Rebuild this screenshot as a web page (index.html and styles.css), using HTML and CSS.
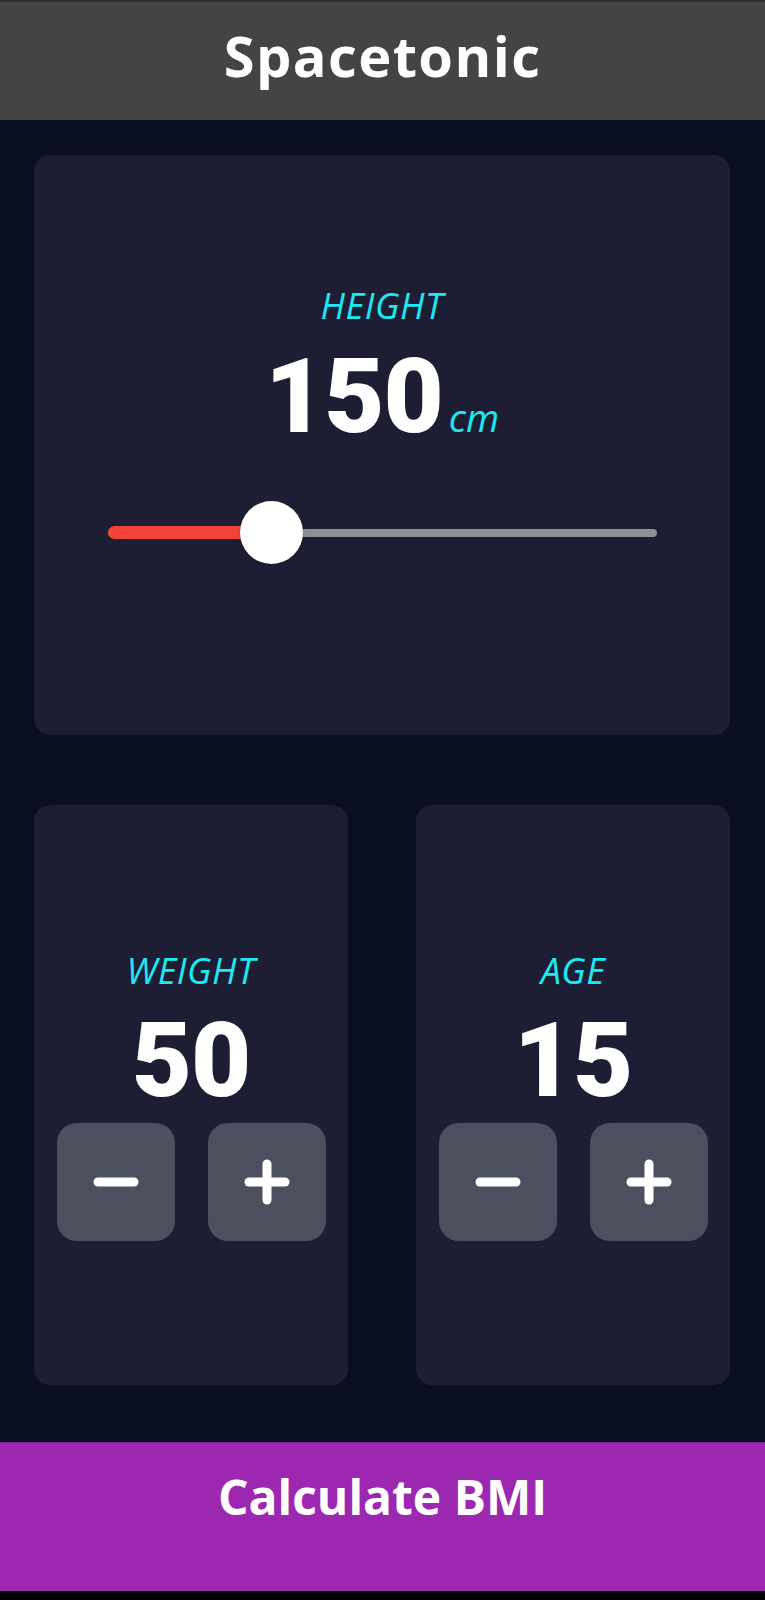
FILE: index.html
```html
<!DOCTYPE html>
<html lang="en">
<head>
<meta charset="utf-8">
<title>Spacetonic</title>
<link rel="stylesheet" href="styles.css">
</head>
<body>
<div class="app">
  <header class="appbar"><h1 class="title">Spacetonic</h1></header>
  <main class="main">
    <section class="card card-height">
      <div class="label">HEIGHT</div>
      <div class="value-row">
        <span class="number">150</span><span class="unit">cm</span>
      </div>
      <div class="slider">
        <div class="track"></div>
        <div class="track-active" style="width: 30%"></div>
        <div class="thumb" style="left: 30%"></div>
      </div>
    </section>
    <div class="row">
      <section class="card card-small">
        <div class="label">WEIGHT</div>
        <div class="number">50</div>
        <div class="buttons">
          <button class="round-btn" aria-label="minus">
            <svg width="46" height="46" viewBox="0 0 46 46"><line x1="5" y1="23" x2="41" y2="23"/></svg>
          </button>
          <button class="round-btn" aria-label="plus">
            <svg width="46" height="46" viewBox="0 0 46 46"><line x1="5" y1="23" x2="41" y2="23"/><line x1="23" y1="5" x2="23" y2="41"/></svg>
          </button>
        </div>
      </section>
      <section class="card card-small">
        <div class="label">AGE</div>
        <div class="number">15</div>
        <div class="buttons">
          <button class="round-btn" aria-label="minus">
            <svg width="46" height="46" viewBox="0 0 46 46"><line x1="5" y1="23" x2="41" y2="23"/></svg>
          </button>
          <button class="round-btn" aria-label="plus">
            <svg width="46" height="46" viewBox="0 0 46 46"><line x1="5" y1="23" x2="41" y2="23"/><line x1="23" y1="5" x2="23" y2="41"/></svg>
          </button>
        </div>
      </section>
    </div>
  </main>
  <footer class="calc"><span class="calc-text">Calculate BMI</span></footer>
  <div class="navbar"></div>
</div>
</body>
</html>
```

FILE: styles.css
```css
* { box-sizing: border-box; }
html, body {
  margin: 0;
  padding: 0;
  background: #0a0e21;
}
body {
  font-family: "Open Sans", "Noto Sans", sans-serif;
  color: #ffffff;
}
.app {
  width: 765px;
  height: 1600px;
  display: flex;
  flex-direction: column;
}
.appbar {
  height: 120px;
  background: #444444;
  border-top: 2px solid #2e2e2e;
  padding-top: 25px;
  display: flex;
  justify-content: center;
  align-items: flex-start;
}
.title {
  margin: 0;
  font-size: 56px;
  line-height: 1;
  font-weight: 700;
  letter-spacing: 1.4px;
  color: #ffffff;
}
.main {
  padding: 35px 35px 0 34px;
  display: flex;
  flex-direction: column;
  gap: 70px;
}
.card {
  background: #1d1e33;
  border-radius: 16px;
  height: 580px;
  display: flex;
  flex-direction: column;
  align-items: center;
}
.card-height {
  padding-top: 133px;
}
.label {
  font-size: 36px;
  line-height: 1;
  font-style: italic;
  color: #1ee8f2;
  letter-spacing: 0.5px;
}
.value-row {
  margin-top: 21px;
  display: flex;
  align-items: baseline;
}
.number {
  font-family: "Roboto", "Open Sans", sans-serif;
  font-size: 104px;
  line-height: 1;
  font-weight: 900;
  letter-spacing: -1px;
  color: #ffffff;
}
.card-small .number {
  margin-top: 20px;
}
.unit {
  margin-left: 6px;
  font-size: 38px;
  line-height: 1;
  font-style: italic;
  color: #1ee8f2;
}
.slider {
  position: relative;
  margin-top: 52px;
  width: 549px;
  height: 64px;
}
.track {
  position: absolute;
  left: 0;
  right: 0;
  top: 28px;
  height: 8px;
  border-radius: 4px;
  background: #8d8e98;
}
.track-active {
  position: absolute;
  left: 0;
  top: 25px;
  height: 13px;
  border-radius: 7px;
  background: #f44336;
}
.thumb {
  position: absolute;
  top: 0;
  width: 63px;
  height: 63px;
  margin-left: -32px;
  border-radius: 50%;
  background: #ffffff;
  box-shadow: 0 1px 2px rgba(0, 0, 0, 0.3);
}
.row {
  display: grid;
  grid-template-columns: 314px 314px;
  column-gap: 68px;
}
.card-small {
  padding-top: 148px;
}
.buttons {
  margin-top: 10px;
  display: flex;
  gap: 33px;
}
.round-btn {
  width: 118px;
  height: 118px;
  border: none;
  border-radius: 20px;
  background: #4c4f5e;
  display: flex;
  align-items: center;
  justify-content: center;
  padding: 0;
}
.round-btn svg line {
  stroke: #ffffff;
  stroke-width: 9;
  stroke-linecap: round;
}
.calc {
  margin-top: 57px;
  height: 149px;
  background: #9c27b0;
  border-top: 1px solid #7e1e90;
  padding-top: 30px;
  display: flex;
  justify-content: center;
  align-items: flex-start;
}
.calc-text {
  font-size: 48px;
  line-height: 1;
  font-weight: 700;
  color: #ffffff;
}
.navbar {
  flex: 1;
  background: #000000;
}
```
